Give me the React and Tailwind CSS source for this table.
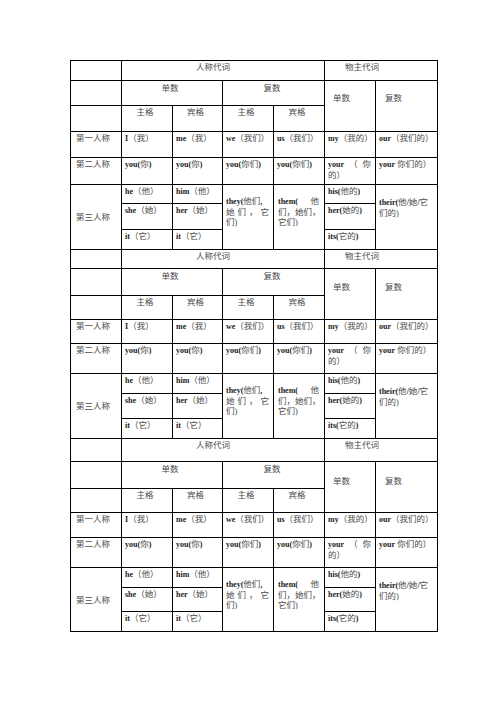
import React from 'react'

// latin runs are darker and bold, like the converted doc
function R({ t }) {
  return t.split(/([\x21-\x7E]+)/).map((p, i) =>
    /[\x21-\x7E]/.test(p) ? (
      <span key={i} className="text-[8px] font-bold text-[#1c1c1c]">{p}</span>
    ) : (
      <span key={i}>{p}</span>
    )
  )
}

function Spread({ parts }) {
  return (
    <div className="flex justify-between">
      {parts.map((p, i) => (
        <span key={i}><R t={p} /></span>
      ))}
    </div>
  )
}

function C({ className = '', children }) {
  return (
    <div className={`border-r border-b border-black leading-[10px] ${className}`}>
      {children}
    </div>
  )
}

function PronounTable({ rows, first, ownPad }) {
  return (
    <div
      className={`grid grid-cols-[51px_51px_50px_51px_51px_51px_62px] border-l border-black ${rows} ${
        first ? 'border-t' : ''
      }`}
    >
      {/* header */}
      <C />
      <C className="col-span-4 text-center pr-[20px] pt-[1px]">人称代词</C>
      <C className="col-span-2 pl-[20px] pt-[1px]">物主代词</C>

      <C />
      <C className="col-span-2 text-center pr-[4px] pt-[2px]">单数</C>
      <C className="col-span-2 text-center pr-[3px] pt-[2px]">复数</C>
      <C className={`row-span-2 pl-[8px] ${ownPad}`}>单数</C>
      <C className={`row-span-2 pl-[9px] ${ownPad}`}>复数</C>

      <C />
      <C className="text-center pr-[4px] pt-[1px]">主格</C>
      <C className="text-center pr-[4px] pt-[1px]">宾格</C>
      <C className="text-center pr-[4px] pt-[1px]">主格</C>
      <C className="text-center pr-[4px] pt-[1px]">宾格</C>

      {/* first person */}
      <C className="pl-[5px] pt-[1px]">第一人称</C>
      <C className="pl-[3px] pt-[1px]"><R t="I（我）" /></C>
      <C className="pl-[3px] pt-[1px]"><R t="me（我）" /></C>
      <C className="pl-[3px] pt-[1px]"><R t="we（我们）" /></C>
      <C className="pl-[3px] pt-[1px]"><R t="us（我们）" /></C>
      <C className="pl-[3px] pt-[1px]"><R t="my（我的）" /></C>
      <C className="pl-[3px] pt-[1px]"><R t="our（我们的）" /></C>

      {/* second person */}
      <C className="pl-[5px] pt-[1px]">第二人称</C>
      <C className="pl-[3px] pt-[1px]"><R t="you(你)" /></C>
      <C className="pl-[3px] pt-[1px]"><R t="you(你)" /></C>
      <C className="pl-[3px] pt-[1px]"><R t="you(你们)" /></C>
      <C className="pl-[3px] pt-[1px]"><R t="you(你们)" /></C>
      <C className="pl-[3px] pr-[4px] pt-[1px]">
        <Spread parts={['your', '（', '你']} />
        <div>的）</div>
      </C>
      <C className="pl-[3px] pt-[1px]"><R t="your 你们的）" /></C>

      {/* third person */}
      <C className="row-span-3 flex items-center pl-[5px]">第三人称</C>
      <C className="pl-[3px] pt-[1px]"><R t="he（他）" /></C>
      <C className="pl-[3px] pt-[1px]"><R t="him（他）" /></C>
      <C className="row-span-3 flex flex-col justify-center pl-[3px] pr-[4px] pb-[11px]">
        <div className="whitespace-nowrap"><R t="they(他们," /></div>
        <Spread parts={['她', '们', '，', '它']} />
        <div>们)</div>
      </C>
      <C className="row-span-3 flex flex-col justify-center pl-[4px] pr-[5px] pb-[11px]">
        <Spread parts={['them(', '他']} />
        <div className="whitespace-nowrap">们，她们，</div>
        <div>它们)</div>
      </C>
      <C className="pl-[3px] pt-[1px]"><R t="his(他的)" /></C>
      <C className="row-span-3 flex flex-col justify-center pl-[3px] pb-[19px]">
        <div className="whitespace-nowrap"><R t="their(他/她/它" /></div>
        <div>们的)</div>
      </C>

      <C className="pl-[3px] pt-[1px]"><R t="she（她）" /></C>
      <C className="pl-[3px] pt-[1px]"><R t="her（她）" /></C>
      <C className="pl-[3px] pt-[1px]"><R t="her(她的)" /></C>

      <C className="pl-[3px] pt-[1px]"><R t="it（它）" /></C>
      <C className="pl-[3px] pt-[1px]"><R t="it（它）" /></C>
      <C className="pl-[3px] pt-[1px]"><R t="its(它的)" /></C>
    </div>
  )
}

export default function App() {
  return (
    <div className="min-h-[702px] w-[496px] bg-white pt-[60px] pl-[70px] text-[8.5px] text-[#4a4a4a] font-[family-name:'Liberation_Serif','Noto_Sans_CJK_SC',serif]">
      <div className="flex w-[368px] flex-col">
        <PronounTable
          first
          rows="grid-rows-[20px_25px_26px_26px_27px_19px_26px_20px]"
          ownPad="pt-[12px]"
        />
        <PronounTable
          rows="grid-rows-[19px_27px_24px_24px_30px_20px_25px_20px]"
          ownPad="pt-[13px]"
        />
        <PronounTable
          rows="grid-rows-[23px_27px_24px_25px_30px_20px_24px_20px]"
          ownPad="pt-[14px]"
        />
      </div>
    </div>
  )
}
